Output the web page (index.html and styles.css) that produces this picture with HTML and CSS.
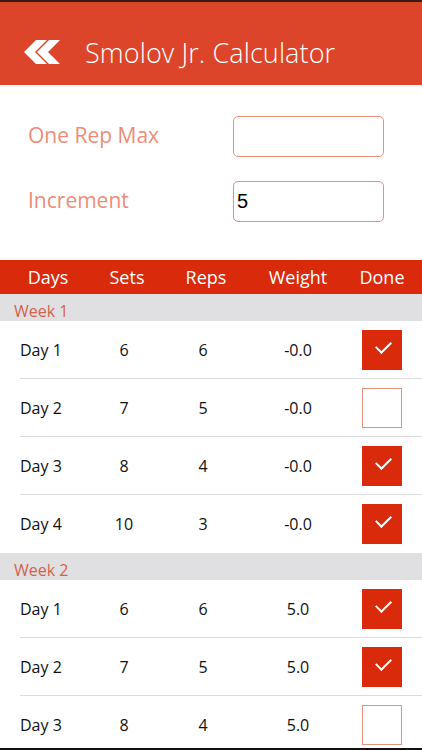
FILE: index.html
```html
<!DOCTYPE html>
<html>
<head>
<meta charset="utf-8">
<link rel="stylesheet" href="styles.css">
</head>
<body>
<div class="screen">
  <header class="topbar">
    <svg class="back" width="40" height="28" viewBox="0 0 40 28">
      <polygon points="0,13 12,1 23,1 11,13 23,25 12,25" fill="#fff"/>
      <polygon points="13,13 25,1 36,1 24,13 36,25 25,25" fill="#fff"/>
    </svg>
    <h1 class="title">Smolov Jr. Calculator</h1>
  </header>
  <section class="form">
    <div class="field"><label class="label">One Rep Max</label><div class="input"></div></div>
    <div class="field"><label class="label">Increment</label><div class="input">5</div></div>
  </section>
  <div class="thead">
    <span class="c1">Days</span><span class="c2">Sets</span><span class="c3">Reps</span><span class="c4">Weight</span><span class="c5">Done</span>
  </div>
  <div class="week">Week 1</div>
  <div class="row"><span class="c1">Day 1</span><span class="c2">6</span><span class="c3">6</span><span class="c4">-0.0</span><span class="c5"><span class="box on"></span></span></div>
  <div class="row"><span class="c1">Day 2</span><span class="c2">7</span><span class="c3">5</span><span class="c4">-0.0</span><span class="c5"><span class="box"></span></span></div>
  <div class="row"><span class="c1">Day 3</span><span class="c2">8</span><span class="c3">4</span><span class="c4">-0.0</span><span class="c5"><span class="box on"></span></span></div>
  <div class="row last"><span class="c1">Day 4</span><span class="c2">10</span><span class="c3">3</span><span class="c4">-0.0</span><span class="c5"><span class="box on"></span></span></div>
  <div class="week">Week 2</div>
  <div class="row"><span class="c1">Day 1</span><span class="c2">6</span><span class="c3">6</span><span class="c4">5.0</span><span class="c5"><span class="box on"></span></span></div>
  <div class="row"><span class="c1">Day 2</span><span class="c2">7</span><span class="c3">5</span><span class="c4">5.0</span><span class="c5"><span class="box on"></span></span></div>
  <div class="row last"><span class="c1">Day 3</span><span class="c2">8</span><span class="c3">4</span><span class="c4">5.0</span><span class="c5"><span class="box"></span></span></div>
</div>
</body>
</html>
```
FILE: styles.css
```css
html, body { margin: 0; padding: 0; }
body { width: 422px; height: 750px; overflow: hidden; background: #fff; font-family: "Open Sans", "Noto Sans", sans-serif; }
.screen { height: 750px; box-sizing: border-box; border-top: 2px solid #3a1a12; border-bottom: 2px solid #111; overflow: hidden; }
.topbar { height: 83px; background: #dc4529; display: flex; align-items: center; padding: 18px 0 0 24px; box-sizing: border-box; }
.back { display: block; margin-right: 21px; }
.title { margin: 0; font-weight: 300; font-size: 27px; color: #fff; letter-spacing: 0.1px; }
.form { height: 175px; box-sizing: border-box; padding-top: 31px; display: flex; flex-direction: column; gap: 24px; }
.field { display: flex; align-items: center; height: 41px; }
.label { width: 233px; padding-left: 28px; padding-bottom: 3px; box-sizing: border-box; font-size: 21px; font-weight: 400; color: #ef8c76; }
.input { width: 151px; height: 41px; box-sizing: border-box; border: 1.5px solid #eb8f7c; border-radius: 5px; font-family: "Liberation Sans", Arial, sans-serif; font-size: 20px; color: #000; display: flex; align-items: center; padding-left: 3px; }
.thead { height: 34px; background: #d92a0c; color: #fff; display: flex; align-items: center; font-size: 18px; font-weight: 400; }
.week { height: 27px; background: #e0dfe1; color: #d2624d; font-size: 16px; padding-left: 14px; display: flex; align-items: flex-end; line-height: 1; padding-bottom: 2px; box-sizing: border-box; }
.row { height: 58px; display: flex; align-items: center; font-size: 16px; color: #111; position: relative; }
.row::after { content: ""; position: absolute; left: 20px; right: 0; bottom: 0; height: 1px; background: #dcdcdc; }
.row.last::after { display: none; }
.c1, .c2, .c3, .c4, .c5 { display: flex; justify-content: center; flex-shrink: 0; }
.c1 { width: 96px; }
.c2 { width: 62px; }
.c3 { width: 96px; }
.c4 { width: 88px; }
.c5 { width: 80px; }
.row .c1 { justify-content: flex-start; padding-left: 20px; box-sizing: border-box; }
.row .c2 { width: 56px; }
.row .c3 { width: 102px; }
.row .c4 { width: 88px; }
.row .c5 { width: 80px; }
.box { width: 40px; height: 40px; box-sizing: border-box; border: 1.5px solid #e8907e; background: #fff; position: relative; }
.box.on { background: #d92a0c; border-color: #d92a0c; }
.box.on::after { content: ""; position: absolute; left: 13px; top: 10px; width: 13px; height: 7px; border-left: 2.5px solid #fff; border-bottom: 2.5px solid #fff; transform: rotate(-45deg); }
```
